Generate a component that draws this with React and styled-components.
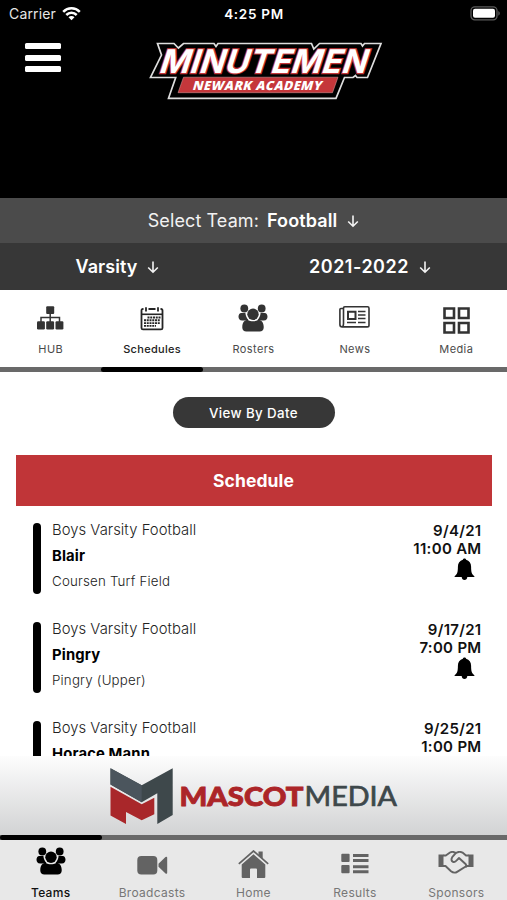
import React from "react";
import styled, { createGlobalStyle, css } from "styled-components";

const GlobalStyle = createGlobalStyle`
  * {
    box-sizing: border-box;
  }

  body {
    margin: 0;
    background: #fff;
    font-family: Inter, "Liberation Sans", sans-serif;
  }

  svg {
    display: block;
    flex: none;
  }
`;

const Screen = styled.div`
  display: flex;
  flex-direction: column;
  width: 507px;
  height: 900px;
  overflow: hidden;
  background: #fff;
`;

const Header = styled.header`
  height: 198px;
  flex: none;
  background: #000;
  color: #fff;
`;

const StatusBar = styled.div`
  display: grid;
  grid-template-columns: 1fr auto 1fr;
  align-items: center;
  height: 27px;
  padding: 0 6px 0 9px;
`;

const Carrier = styled.div`
  display: flex;
  align-items: center;
  gap: 6px;
  font-size: 14px;
  letter-spacing: 0.15px;
  color: #e6e6e6;
`;

const Clock = styled.div`
  margin-right: 2px;
  font-size: 13.5px;
  font-weight: 600;
  letter-spacing: 0.7px;
`;

const BatterySlot = styled.div`
  display: flex;
  justify-content: flex-end;
`;

const Brand = styled.div`
  display: grid;
  grid-template-columns: 124px 1fr;
  padding: 14px 0 0 25px;
`;

const MenuButton = styled.button`
  display: flex;
  flex-direction: column;
  gap: 5.3px;
  width: 36px;
  padding: 2px 0 0;
  border: 0;
  background: none;
`;

const MenuLine = styled.span`
  height: 6.3px;
  border-radius: 1.5px;
  background: #fff;
`;

const SelectBar = styled.div`
  display: grid;
  grid-template-columns: ${props => (props.dark ? "235px 270px" : "1fr")};
  flex: none;
  height: ${props => (props.dark ? "47px" : "45px")};
  background: ${props => (props.dark ? "#373737" : "#4b4b4b")};
`;

const Select = styled.div`
  display: flex;
  align-items: center;
  justify-content: center;
  font-size: 18px;
  letter-spacing: ${props => props.spacing || 0}px;
  color: #f2f2f2;

  strong {
    font-weight: 600;
    color: #fff;
  }

  span {
    margin-right: 8px;
  }

  svg {
    margin-left: 10px;
  }
`;

const Tabs = styled.nav`
  display: grid;
  grid-template-columns: repeat(5, 1fr);
  flex: none;
  height: ${props => (props.bottom ? "60px" : "77px")};
  background: ${props => (props.bottom ? "#e8e8e8" : "#fff")};
`;

const Tab = styled.div`
  display: flex;
  flex-direction: column;
  align-items: center;
  font-size: 11px;
  letter-spacing: 0.4px;
  color: #4a4a4a;

  ${props =>
    props.active &&
    css`
      font-weight: 500;
      letter-spacing: 0.3px;
      color: #222;
    `}

  ${props =>
    props.bottom &&
    css`
      font-size: 12px;
      letter-spacing: 0.3px;
      color: ${props.active ? "#111" : "#777"};
    `}
`;

const TabIcon = styled.div`
  display: flex;
  align-items: center;
  justify-content: center;
  height: ${props => (props.bottom ? "45px" : "52px")};
  padding-top: ${props => props.drop || 0}px;
  padding-bottom: ${props => props.lift || 0}px;
  color: ${props => props.tint || "#333"};
`;

const TabLabel = styled.span`
  line-height: 15px;
`;

const Track = styled.div`
  display: flex;
  flex: none;
  height: 5px;
  padding-left: ${props => (props.index * 100) / 5}%;
  background: #696969;
`;

const Thumb = styled.div`
  width: 102px;
  border-radius: 3px;
  background: #000;
`;

const Content = styled.main`
  flex: 1;
  min-height: 0;
  overflow: hidden;
  padding: 25px 15.5px 0;
`;

const DateButton = styled.button`
  display: block;
  width: 162px;
  height: 31px;
  margin: 0 auto 27px;
  padding: 0;
  border: 0;
  border-radius: 16px;
  background: #373737;
  color: #fff;
  font: 500 13.3px Inter, sans-serif;
  letter-spacing: 0.4px;
`;

const SectionTitle = styled.h2`
  margin: 0 0 16.5px;
  height: 51px;
  background: #c03538;
  color: #fff;
  font-size: 17.5px;
  font-weight: 700;
  line-height: 51px;
  letter-spacing: 0.1px;
  text-align: center;
`;

const Game = styled.article`
  display: flex;
  height: 71px;
  margin-bottom: 28px;
  padding: 0 10px 0 17px;
`;

const Marker = styled.div`
  width: 8px;
  margin-right: 11.5px;
  border-radius: 4px;
  background: #000;
`;

const GameInfo = styled.div`
  flex: 1;
  margin-top: -6px;
  line-height: 26px;
  color: #222;
`;

const League = styled.div`
  font-size: 14.8px;
  font-weight: 300;
  letter-spacing: 0.05px;
`;

const Opponent = styled.div`
  font-size: 14.8px;
  font-weight: 700;
  letter-spacing: 0.15px;
  color: #000;
`;

const Place = styled.div`
  margin-top: -1px;
  font-size: 13.3px;
  font-weight: 300;
  letter-spacing: 0.2px;
`;

const GameTime = styled.div`
  display: flex;
  flex-direction: column;
  align-items: flex-end;
  margin-top: -1px;
  font-size: 15px;
  font-weight: 600;
  line-height: 18px;
  letter-spacing: 0.3px;
  color: #111;

  svg {
    margin-right: 7px;
  }
`;

const Sponsor = styled.div`
  flex: none;
  height: 79px;
  padding: 8px 0 0 105px;
  background: linear-gradient(#fdfdfd, #d2d3d4);
`;

const Arrow = () => (
  <svg width="12" height="14" viewBox="0 0 12 14" fill="none" stroke="#f4f4f4" strokeWidth="1.6">
    <path d="M6 1.5v10.5M1.2 7.5L6 12.2l4.8-4.7" />
  </svg>
);

const Wifi = () => (
  <svg width="19" height="15" viewBox="0 0 19 15" fill="none" stroke="#fff" strokeWidth="2.5">
    <path d="M1.2 5.8a11.7 11.7 0 0 1 16.6 0M4.3 9a7.3 7.3 0 0 1 10.4 0" />
    <path d="M9.5 14.2l-3-3a4.2 4.2 0 0 1 6 0z" fill="#fff" stroke="none" />
  </svg>
);

const Battery = () => (
  <svg width="31" height="15" viewBox="0 0 31 15">
    <rect x="1" y="0.8" width="26" height="13" rx="3.8" fill="none" stroke="#5b5b5b" strokeWidth="1.3" />
    <rect x="3" y="2.8" width="22" height="9" rx="2" fill="#fff" />
    <path d="M28.3 5c2 1 2 3.7 0 4.7z" fill="#5b5b5b" />
  </svg>
);

const TeamLogo = () => (
  <svg width="234" height="60" viewBox="149 41 234 60">
    <path
      d="M157.5 43.5H174l4.4 4.5 5.1-4.5h30.5l2 3 2-3h93.5l2.3 5.5 5.7-5.5H361l1.5 2.5 2-2.5h16.5L367.5 77.500H357l-1.5-2-2.5 2h-8.5L336 98.300H168.500l7.200-20.800H150.500l11-22.500z"
      fill="#000"
      stroke="#dedede"
      strokeWidth="1.7"
    />
    <path d="M183.5 77.200h154.500l-5.500 15.500H178z" fill="#c5373b" stroke="#dba5a5" strokeWidth="0.5" />
    <g fontFamily="Inter, sans-serif" fontWeight="700" fill="#fff">
      <text
        transform="translate(158 72.7) skewX(-18)"
        fontSize="32.5"
        textLength="207"
        lengthAdjust="spacing"
        stroke="#c5373b"
        strokeWidth="2.4"
        paintOrder="stroke"
      >
        MINUTEMEN
      </text>
      <text
        transform="translate(192 89.5) skewX(-16)"
        fontFamily="Open Sans, sans-serif"
        fontWeight="800"
        fontSize="12.5"
        textLength="129"
        lengthAdjust="spacing"
      >
        NEWARK ACADEMY
      </text>
    </g>
  </svg>
);

const MascotLogo = () => (
  <svg width="300" height="64" viewBox="105 764 300 64">
    <path
      d="M110.5 768.3l31.2 17 31-17V815l-15.4 9v-30.7l-15.6 9-31.2-17.8z"
      fill="#3e484b"
    />
    <path d="M110.5 768.3l31.2 17v17l-31.2-17.8z" fill="#4b555d" />
    <path
      d="M110.5 786.7l31.2 17.6 12.6-6.5v16.5l-12.6 6-15.7-8.3v12l-15.5-8.5z"
      fill="#a9272a"
    />
    <g fontFamily="Lato, sans-serif" fontSize="27.3">
      <text x="179.5" y="806.3" fontWeight="900" fill="#ac2528" stroke="#ac2528" strokeWidth="0.9" textLength="124" lengthAdjust="spacingAndGlyphs">
        MASCOT
      </text>
      <text x="304.5" y="806.3" fontWeight="400" fill="#3e484b" stroke="#3e484b" strokeWidth="0.7" textLength="92.5" lengthAdjust="spacingAndGlyphs">
        MEDIA
      </text>
    </g>
  </svg>
);

const Sitemap = () => (
  <svg width="27" height="24" viewBox="0 0 27 24" fill="currentColor">
    <rect x="9.2" y="0.3" width="8" height="7.7" rx="1" />
    <rect x="0" y="15.2" width="7.9" height="8.300" rx="1.2" />
    <rect x="9.2" y="15.2" width="7.9" height="8.300" rx="1.2" />
    <rect x="18.5" y="15.2" width="7.9" height="8.300" rx="1.2" />
    <path d="M13.200 7v9M4 16v-4.500h18.500V16" fill="none" stroke="currentColor" strokeWidth="1.5" />
  </svg>
);

const Newspaper = () => (
  <svg width="31" height="22" viewBox="0 0 31 22" fill="none" stroke="currentColor" strokeWidth="1.6">
    <path d="M4.5 17.500V2.200q0-1.400 1.400-1.400h22.700q1.400 0 1.400 1.400v17q0 1.700-1.700 1.700H3.200Q.9 20.900.9 18.500V3.500q0-1 1-1h2.600M4.500 17.500q0 3.400-1.700 3.400" />
    <path d="M9 5.700h7.500V13H9z" strokeWidth="2" />
    <path d="M19 5.500h7.500M19 9h7.500M19 12.500h7.500M8 16.600h9M19 16.600h7.500" strokeWidth="1.5" />
  </svg>
);

const Calendar = () => (
  <svg width="24" height="24" viewBox="0 0 23 24" fill="none" stroke="#252525">
    <path d="M3 2H2.500Q1 2 1 3.500v17.400Q1 22.400 2.500 22.400h18q1.500 0 1.500-1.500V3.500Q22 2 20.500 2H20M8 2h7" strokeWidth="1.8" />
    <path d="M1 7.300h21" strokeWidth="1.6" />
    <path d="M5.500 0.300v4.200M17.500 0.300v4.200" strokeWidth="1.8" />
    <path d="M7 10.500h13M3.500 13.300H20M3.500 16.100H20M3.500 18.900h12" strokeWidth="1.9" strokeDasharray="2 0.75" />
  </svg>
);

const People = () => (
  <svg width="30" height="28" viewBox="0 0 30 28" fill="currentColor">
    <circle cx="6.3" cy="4.5" r="3.9" />
    <circle cx="23.7" cy="4.5" r="3.9" />
    <path d="M3.200 9h4.200c.2 3 1.300 5 3 6.800-1 .7-2 .8-3 .8H4.200C1.500 16.500.5 14.500.5 12.500S1.700 9.200 3.200 9z" />
    <path d="M26.800 9h-4.200c-.2 3-1.300 5-3 6.800 1 .7 2 .8 3 .8h3.200c2.700-.1 3.700-2.100 3.700-4.100S28.300 9.200 26.800 9z" />
    <circle cx="15" cy="10.3" r="5.7" />
    <path d="M9.500 15.700c3.400 2.200 7.600 2.200 11 0 3 .3 5.200 3 5.200 6.800v1.200c0 2.300-1.700 3.700-4 3.700H8.300c-2.300 0-4-1.400-4-3.700v-1.200c0-3.800 2.200-6.500 5.200-6.800z" />
  </svg>
);

const Grid = () => (
  <svg width="27" height="27" viewBox="0 0 27 27" fill="none" stroke="#333" strokeWidth="2.6">
    <path d="M1.5 1.500h9.500V11H1.500zM16 1.500h9.500V11H16zM1.500 16h9.500v9.500H1.500zM16 16h9.500v9.500H16z" />
  </svg>
);

const Camera = () => (
  <svg width="31" height="20" viewBox="0 0 31 20" fill="currentColor">
    <rect x="0.3" y="1" width="20" height="18.5" rx="4" />
    <path d="M21.500 8.700l7-6.700q1.700-1 1.700.8v14.900q0 1.800-1.700.8l-7-6.700z" />
  </svg>
);

const House = () => (
  <svg width="31" height="29" viewBox="0 0 31 29" fill="currentColor">
    <path d="M0.8 13.800L15.500 1l14.700 12.800" fill="none" stroke="currentColor" strokeWidth="1.7" />
    <path d="M20.500 1.500h4.200v7.500l-4.200-3.700z" />
    <path d="M15.500 4.200l11.800 10.300V27q0 1-1 1H19v-8.500q0-1-1-1h-5q-1 0-1 1V28H4.700q-1 0-1-1V14.500z" />
  </svg>
);

const Results = () => (
  <svg width="28" height="21" viewBox="0 0 28 21" fill="currentColor">
    <rect x="0.3" y="0.7" width="8.3" height="8.3" rx="1" />
    <rect x="0.3" y="12" width="8.3" height="8.3" rx="1" />
    <path d="M12 .9h15.500v3H12zM12 5.900h15.500v3H12zM12 12.200h15.500v3H12zM12 17.200h15.500v3H12z" />
  </svg>
);

const Handshake = () => (
  <svg width="36" height="23" viewBox="0 0 36 23" fill="none" stroke="currentColor" strokeWidth="1.9" strokeLinejoin="round">
    <path d="M0.5 3.500h5v12.500h-5zM30.500 3.500h5v12.500h-5z" fill="currentColor" stroke="none" />
    <path d="M5 4.500h2.800L12 1.500q1.500-.8 3.200-.5l2.800.8 2.500-.8q2-.4 4 .6L28 4.500h3M5 15h2.500l5.500 5.300q3.200 2.500 6.500.3L28.500 15h2.500" />
    <path d="M18 1.800l-3.800 4.400q-1.800 3.300.8 4.600 2.200.8 3.700-1.500l2.300-2.300 6.800 6.300q1.300 1.700-.3 3" />
  </svg>
);

const Bell = () => (
  <svg width="21" height="23" viewBox="0 0 21 23">
    <path
      d="M10.500.5c1 0 1.600.7 1.600 1.300 3.200.8 5 3.400 5 6.900 0 5.500.7 7.600 3 9.200.7.500.5 1.200-.4 1.200H1.300c-.9 0-1.100-.7-.4-1.200 2.300-1.600 3-3.700 3-9.200 0-3.500 1.800-6.100 5-6.900 0-.6.600-1.300 1.600-1.300zM7.700 19h5.600c-.1 1.800-1.200 3-2.800 3S7.800 20.800 7.700 19z"
      fill="#000"
    />
  </svg>
);

const sections = [
  { label: "HUB", icon: <Sitemap />, drop: 4 },
  { label: "Schedules", icon: <Calendar />, drop: 5 },
  { label: "Rosters", icon: <People />, drop: 3 },
  { label: "News", icon: <Newspaper />, drop: 2 },
  { label: "Media", icon: <Grid />, drop: 9 }
];

const pages = [
  { label: "Teams", icon: <People />, lift: 4 },
  { label: "Broadcasts", icon: <Camera />, drop: 4 },
  { label: "Home", icon: <House />, drop: 4 },
  { label: "Results", icon: <Results />, drop: 2 },
  { label: "Sponsors", icon: <Handshake />, lift: 1 }
];

const games = [
  { opponent: "Blair", place: "Coursen Turf Field", date: "9/4/21", time: "11:00 AM" },
  { opponent: "Pingry", place: "Pingry (Upper)", date: "9/17/21", time: "7:00 PM" },
  { opponent: "Horace Mann", place: "", date: "9/25/21", time: "1:00 PM" }
];

const TabBar = ({ items, active, bottom }) => (
  <Tabs bottom={bottom}>
    {items.map((item, i) => (
      <Tab key={item.label} active={i === active} bottom={bottom}>
        <TabIcon
          bottom={bottom}
          drop={item.drop}
          lift={item.lift}
          tint={bottom ? (i === active ? "#000" : "#636363") : "#333"}
        >
          {item.icon}
        </TabIcon>
        <TabLabel>{item.label}</TabLabel>
      </Tab>
    ))}
  </Tabs>
);

const App = () => (
  <Screen>
    <GlobalStyle />
    <Header>
      <StatusBar>
        <Carrier>
          Carrier <Wifi />
        </Carrier>
        <Clock>4:25 PM</Clock>
        <BatterySlot>
          <Battery />
        </BatterySlot>
      </StatusBar>
      <Brand>
        <MenuButton aria-label="Menu">
          <MenuLine />
          <MenuLine />
          <MenuLine />
        </MenuButton>
        <TeamLogo />
      </Brand>
    </Header>

    <SelectBar>
      <Select spacing={0.1}>
        <span>Select Team:</span>
        <strong>Football</strong>
        <Arrow />
      </Select>
    </SelectBar>
    <SelectBar dark>
      <Select spacing={0.05}>
        <strong>Varsity</strong>
        <Arrow />
      </Select>
      <Select spacing={0.5}>
        <strong>2021-2022</strong>
        <Arrow />
      </Select>
    </SelectBar>

    <TabBar items={sections} active={1} />
    <Track index={1}>
      <Thumb />
    </Track>

    <Content>
      <DateButton>View By Date</DateButton>
      <SectionTitle>Schedule</SectionTitle>
      {games.map(game => (
        <Game key={game.date}>
          <Marker />
          <GameInfo>
            <League>Boys Varsity Football</League>
            <Opponent>{game.opponent}</Opponent>
            <Place>{game.place}</Place>
          </GameInfo>
          <GameTime>
            <span>{game.date}</span>
            <span>{game.time}</span>
            <Bell />
          </GameTime>
        </Game>
      ))}
    </Content>

    <Sponsor>
      <MascotLogo />
    </Sponsor>
    <Track index={0}>
      <Thumb />
    </Track>
    <TabBar items={pages} active={0} bottom />
  </Screen>
);

export default App;
